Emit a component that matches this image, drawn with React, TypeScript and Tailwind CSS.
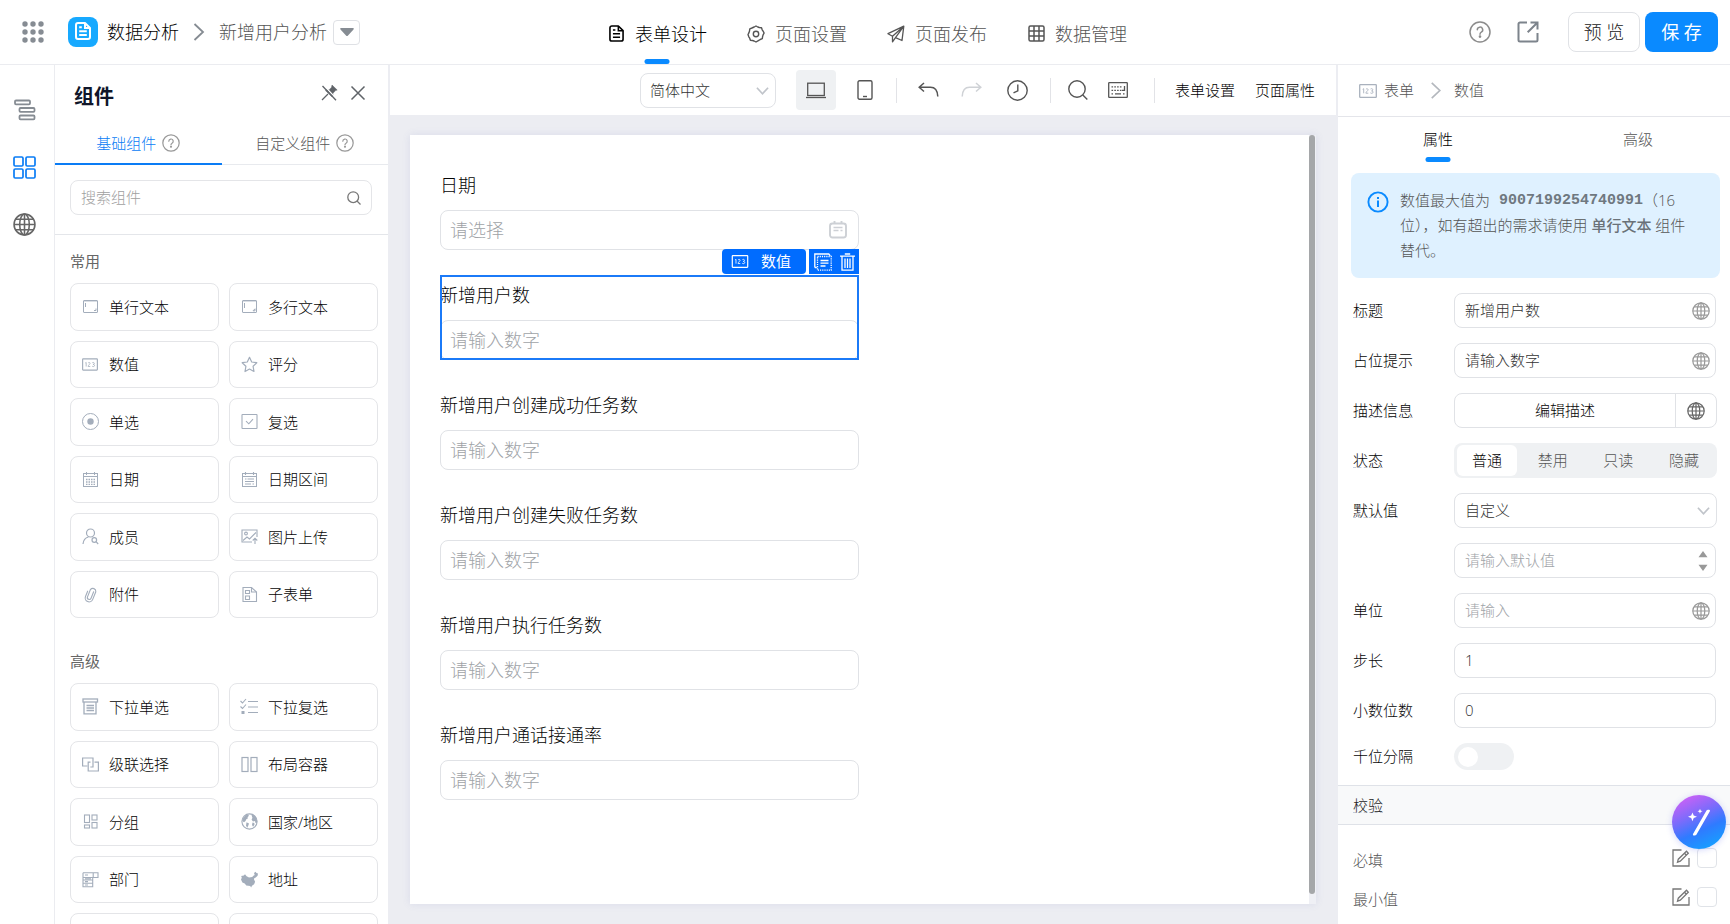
import React, { useState } from "react";
import type { ReactNode } from "react";

/* ---------- shared drawing helpers ---------- */

type SvgProps = { className?: string; box?: string; w?: number; children: ReactNode };

function Svg({ className = "size-[17px]", box = "0 0 17 17", w = 1, children }: SvgProps) {
  return (
    <svg
      className={`block shrink-0 ${className}`}
      viewBox={box}
      fill="none"
      stroke="currentColor"
      strokeWidth={w}
      aria-hidden="true"
    >
      {children}
    </svg>
  );
}

function HelpIcon({ className }: { className: string }) {
  return (
    <Svg className={className} box="0 0 22 22" w={1.5}>
      <circle cx="11" cy="11" r="10" />
      <path d="M8.3 8.8a2.7 2.7 0 1 1 4 2.4c-.9.5-1.3 1-1.3 2" strokeLinecap="round" />
      <circle cx="11" cy="15.6" r="0.6" fill="currentColor" />
    </Svg>
  );
}

function GlobeIcon({ className }: { className: string }) {
  return (
    <Svg className={className} box="0 0 22 22" w={1.5}>
      <circle cx="11" cy="11" r="10" />
      <ellipse cx="11" cy="11" rx="4.6" ry="10" />
      <path d="M11 1v20M1 11h20M2.6 6h16.8M2.6 16h16.8" />
    </Svg>
  );
}

function ChevronDown({ className }: { className: string }) {
  return (
    <Svg className={className} box="0 0 14 14" w={1.8}>
      <path d="M1 4l6 6.5L13 4" />
    </Svg>
  );
}

function ChevronRight({ className }: { className: string }) {
  return (
    <Svg className={className} box="0 0 12 18" w={1.8}>
      <path d="M1.5 1l8.5 8-8.5 8" />
    </Svg>
  );
}

function NumberIcon({ className }: { className: string }) {
  return (
    <Svg className={className} box="0 0 18 14" w={1.3}>
      <rect x="0.7" y="0.7" width="16.6" height="12.6" rx="0.6" />
      <path d="M3.7 5.3l1-.6v4.6M6.9 5.4c.4-.9 2.2-.9 2.2.3 0 1-2.2 2-2.2 3.5h2.4M11.6 5c1-.7 2.4-.2 2.2.9-.1.7-.6 1-1.2 1 .8 0 1.5.4 1.5 1.2 0 1.3-1.7 1.6-2.7.8" strokeWidth="0.9" />
    </Svg>
  );
}

function DocIcon({ className, w = 1.7 }: { className: string; w?: number }) {
  return (
    <Svg className={className} box="0 0 16 18" w={w}>
      <path d="M10 1H3a2 2 0 0 0-2 2v12a2 2 0 0 0 2 2h10a2 2 0 0 0 2-2V6z" strokeLinejoin="round" />
      <path d="M10 1v5h5M4.2 5.2h2.6M4.2 9.3h7.6M4.2 13h7.6" />
    </Svg>
  );
}

/* ---------- component palette ---------- */

type PaletteItem = { name: string; icon: ReactNode };

const basic: PaletteItem[] = [
  {
    name: "单行文本",
    icon: <Svg><rect x="1.5" y="2.5" width="14" height="12" rx=".5" /><path d="M3.500 5v4M12 12.500h2V10.500" /><path d="M2 3.500h13" strokeOpacity=".4" /></Svg>,
  },
  {
    name: "多行文本",
    icon: <Svg><rect x="1.5" y="2.5" width="14" height="12" rx=".5" /><path d="M3.500 5v5M12 12.800l2-2v2z" /><path d="M2 3.500h13" strokeOpacity=".4" /></Svg>,
  },
  { name: "数值", icon: <NumberIcon className="h-[13px] w-[16px]" /> },
  {
    name: "评分",
    icon: <Svg w={1.2}><path d="M8.500 1.300l2.200 4.700 5.100.7-3.700 3.600.9 5.200-4.500-2.500L4 15.500l.9-5.200L1.200 6.700 6.300 6z" strokeLinejoin="round" /></Svg>,
  },
  {
    name: "单选",
    icon: <Svg><circle cx="8.500" cy="8.500" r="8" /><circle cx="8.500" cy="8.500" r="3.200" fill="currentColor" stroke="none" /></Svg>,
  },
  {
    name: "复选",
    icon: <Svg w={1.1}><rect x="1" y="1.500" width="15" height="14" rx=".5" /><path d="M5 8.200l2.800 2.600L12 6.200" /></Svg>,
  },
  {
    name: "日期",
    icon: <Svg><rect x="1.500" y="2.500" width="14" height="13" /><path d="M4.500 1v3M12.500 1v3M1 5.500h15" /><path d="M4 8.500h9M4 11h9M4 13.300h9" strokeDasharray="1.500 1" strokeWidth="1.300" /></Svg>,
  },
  {
    name: "日期区间",
    icon: <Svg><rect x="1.500" y="2.500" width="14" height="13" /><path d="M4.500 1v3M12.500 1v3M1 5.500h15M4 8h1.500M6.500 8H13M4 10.500h9M4 13h6M11.500 13H13" strokeWidth="1.100" /></Svg>,
  },
  {
    name: "成员",
    icon: <Svg w={1.2}><circle cx="8.500" cy="5" r="4" /><path d="M1 16c.4-4 2.500-6.200 5.400-7" /><circle cx="12.300" cy="12" r="2.300" /><path d="M14 13.700l2.200 2.300" /></Svg>,
  },
  {
    name: "图片上传",
    icon: <Svg w={1.1}><path d="M11 14H1V2h15v7" /><circle cx="5" cy="5.500" r="1.400" /><path d="M2 12.500l4-3.500 2.500 2L15 4.500M14 16v-5.500M11.700 12.500L14 10.300l2.300 2.200" /></Svg>,
  },
  {
    name: "附件",
    icon: <Svg w={1.1}><g transform="rotate(22 8.500 8.500)"><path d="M10.400 4.800v7a1.900 1.900 0 0 1-3.800 0V4a3 3 0 0 1 5.800 0v8.200a3.900 3.900 0 0 1-7.800 0V6.500" strokeLinecap="round" /></g></Svg>,
  },
  {
    name: "子表单",
    icon: <Svg w={1.1}><path d="M10.500 1.500H2v14h13.500V6z" /><path d="M10.500 1.500V6h5" /><path d="M4.500 4.500h4v3h-4zM4.500 10h4v3.500h-4z" /></Svg>,
  },
];

const advanced: PaletteItem[] = [
  {
    name: "下拉单选",
    icon: <Svg w={1.3}><rect x="1" y="1" width="14.500" height="3" /><path d="M2 4v11.800h12V4M4.500 7.500h7.500M4.500 10h7.500M4.500 12.500h7.500" /></Svg>,
  },
  {
    name: "下拉复选",
    icon: <Svg className="h-[17px] w-[18px]" box="0 0 18 17" w={1.1}><path d="M.5 3L2.500 5 6 1M.5 8.500l2 2 3.500-4M8 3.500h10M8 9h10M8 14.500h10" /><rect x="1.500" y="13" width="3" height="3" fill="currentColor" stroke="none" /></Svg>,
  },
  {
    name: "级联选择",
    icon: <Svg w={1.2}><path d="M5.500 10H.6V2H11v4" /><path d="M11 9.500V6.200M8.500 6.200H6.200V15h10.200V6.200H12.500M11 6v5H8.300" /></Svg>,
  },
  {
    name: "布局容器",
    icon: <Svg w={1.2}><rect x="1" y="1.500" width="6" height="14" /><rect x="10" y="1.500" width="6" height="14" /></Svg>,
  },
  {
    name: "分组",
    icon: <Svg w={1.1}><rect x="2.500" y="2" width="5" height="7.500" /><rect x="10" y="2" width="5" height="5" /><rect x="2.500" y="12" width="5" height="3" /><rect x="10" y="9.500" width="5" height="5.500" /></Svg>,
  },
  {
    name: "国家/地区",
    icon: <Svg w={1.1}><circle cx="8.500" cy="8.500" r="7.600" /><path d="M1.500 6l3-3.800 2.500-.4 1 1-1.500 1.400.5 1-1.700 1-.8 1.800L3 9.300 1.300 8zM5.500 9.300l2.500 1.200-.7 2-1 2.300-1.300-2zM10.500 2l2.200-.3 2.500 2.800 1 3.500-.6 2.500-1.200-.7-.4-1.800-2 .6-1.400-1.800.8-2zM11.500 9.500l1.800.5.2 1.800-1.400 2-1.100-1.800z" fill="currentColor" stroke="none" /></Svg>,
  },
  {
    name: "部门",
    icon: <Svg w={1.1}><path d="M1 1.800h15v4.700h-4.800V1.800M1 1.800v4.700h10.200M1 6.500v9.300h9.700V6.500M1 9h9.700M1 12.300h9.700M3 4h3M3 7.800h6M3 10.600h3M3 14h3" /></Svg>,
  },
  {
    name: "地址",
    icon: <Svg><path d="M.2 5l2.600-.6L4 3.200l1.600 2 2.400 1.300 3.200-.4 1.200-1.400 1.300-.8-.7-1.900L14.500.8l1 1.200 1.500.6-.4 2.200-1.900 1.600-1.500.9-.2 1.300 1.100 2.100-1 2.500-2.100 1.500-.9 1.700-.9-1.400-1.900-.2-2-.4-1.600-2-2.300-.9L0 8.500l.8-1.700z" fill="currentColor" stroke="none" /></Svg>,
  },
];

function PaletteGroup({ title, items, spare = 0 }: { title: string; items: PaletteItem[]; spare?: number }) {
  return (
    <section className="pt-[14px] pb-[17px]">
      <h3 className="text-[15px] leading-6 font-normal text-[#666]">{title}</h3>
      <div className="mt-[10px] grid h-[335px] grid-cols-2 grid-rows-6 gap-[10px]">
        {items.map((item) => (
          <button
            key={item.name}
            type="button"
            className="flex items-center gap-[10px] rounded-lg border border-[#e4e5e8] bg-white pl-[10px] text-[15px] text-[#050505]"
          >
            <span className="flex w-[18px] justify-center text-[#a3adbb]">{item.icon}</span>
            {item.name}
          </button>
        ))}
        {Array.from({ length: spare }, (_, i) => (
          <div key={i} className="rounded-lg border border-[#e4e5e8]" />
        ))}
      </div>
    </section>
  );
}

function Palette() {
  return (
    <aside className="flex w-[335px] shrink-0 flex-col border-r-2 border-[#ecedf2] bg-white">
      <header className="flex items-center pt-[19px] pr-[22px] pl-[19px]">
        <h2 className="flex-1 text-xl leading-6 font-bold text-[#10162a]">组件</h2>
        <div className="flex gap-[12px] pb-2 text-[#5f6368]">
          <button type="button" aria-label="取消固定">
            <Svg className="size-[17px]" box="0 0 17 17" w={1.3}>
              <path d="M11 1l5.200 5-1.700.6-2.500 2.600v2.800l-1 .7L4.500 6.600l.9-.8 2.700.1 2.500-2.700z" fill="currentColor" strokeWidth=".5" />
              <path d="M1 16l6-6" />
              <path d="M3 1.500l13 14" stroke="white" strokeWidth="1.200" />
              <path d="M1.500 2l13.500 14.300" />
            </Svg>
          </button>
          <button type="button" aria-label="关闭">
            <Svg className="size-[16px]" box="0 0 16 16" w={1.5}>
              <path d="M1.500 1.500l13 13M14.500 1.500l-13 13" />
            </Svg>
          </button>
        </div>
      </header>
      <div className="mt-[14px] grid grid-cols-2 border-b border-[#e8eaee] text-[15px]" role="tablist">
        <button type="button" role="tab" aria-selected="true" className="-mb-px flex h-[42px] items-center justify-center gap-[6px] border-b-2 border-[#0a7cf5] text-[#0a7cf5]">
          基础组件
          <HelpIcon className="size-[18px] text-[#999]" />
        </button>
        <button type="button" role="tab" aria-selected="false" className="flex h-[41px] items-center justify-center gap-[6px] pb-px text-[#555]">
          自定义组件
          <HelpIcon className="size-[18px] text-[#999]" />
        </button>
      </div>
      <div className="border-b border-[#e4e6ea] pr-4 pl-[15px] pt-[15px] pb-[19px]">
        <div className="flex h-[35px] items-center rounded-lg border border-[#e4e5e8] px-[10px]">
          <input aria-label="搜索组件" placeholder="搜索组件" className="min-w-0 flex-1 bg-transparent text-[15px] outline-none placeholder:text-[#a0a0a0]" />
          <Svg className="size-[14px] text-[#777]" box="0 0 14 14" w={1.3}>
            <circle cx="6.200" cy="6.200" r="5.400" />
            <path d="M10 10l3.500 3.500" />
          </Svg>
        </div>
      </div>
      <div className="min-h-0 flex-1 overflow-hidden pr-[10px] pl-[15px]">
        <PaletteGroup title="常用" items={basic} />
        <PaletteGroup title="高级" items={advanced} spare={2} />
      </div>
    </aside>
  );
}

/* ---------- header ---------- */

const navItems = [
  { name: "表单设计", icon: <DocIcon className="h-[17px] w-[15px]" /> },
  {
    name: "页面设置",
    icon: (
      <Svg className="size-[18px]" box="0 0 18 18" w={1.4}>
        <path d="M7.200 2L9 1l1.800 1 1.500.5 2.200.2.700 2.100.9 1.400 1 1.800-1 1.900-.5 1.600-.3 2.200-2.100.800-1.400.800L9 17l-1.900-1-1.500-.5-2.200-.2-.700-2.100-.9-1.400L1 9.500l1-1.900.5-1.600.3-2.200 2.100-.800z" strokeLinejoin="round" />
        <circle cx="9" cy="9" r="2.700" />
      </Svg>
    ),
  },
  {
    name: "页面发布",
    icon: (
      <Svg className="size-[18px]" box="0 0 18 18" w={1.3}>
        <path d="M16.800 1.200L1 8.700l4.500 2.500L16.800 1.200 15 15.500l-6.500-2.800M5.500 11.200v5.600l3-4.100L16.800 1.200" strokeLinejoin="round" />
      </Svg>
    ),
  },
  {
    name: "数据管理",
    icon: (
      <Svg className="size-[17px]" box="0 0 17 17" w={1.5}>
        <rect x="1" y="1" width="15" height="15" rx="1.500" />
        <path d="M6 1v15M11 1v15M1 6h15M1 11h15" />
      </Svg>
    ),
  },
];

function TopBar() {
  return (
    <header className="grid h-[65px] shrink-0 grid-cols-[1fr_auto_1fr] border-b border-[#ebecf0] bg-white text-lg">
      <div className="flex items-center pl-[22px]">
        <button type="button" aria-label="应用列表" className="text-[#868c93]">
          <Svg className="size-[22px]" box="0 0 22 22">
            <g fill="currentColor" stroke="none">
              {[3, 11, 19].map((y) => [3, 11, 19].map((x) => <circle key={`${x}-${y}`} cx={x} cy={y} r="2.700" />))}
            </g>
          </Svg>
        </button>
        <span className="ml-6 flex size-[30px] items-center justify-center rounded-lg bg-[#17a9ff] pb-0.5 text-white">
          <DocIcon className="h-[18px] w-[16px]" w={2} />
        </span>
        <a href="#app" className="ml-[9px] text-black">数据分析</a>
        <ChevronRight className="ml-[14px] h-[18px] w-[12px] text-[#858b92]" />
        <span className="ml-[14px] text-[#555]">新增用户分析</span>
        <button type="button" aria-label="切换页面" className="ml-[6px] flex h-[25px] w-[27px] items-center justify-center rounded border border-[#dfe1e5]">
          <svg className="block h-[8px] w-[14px] fill-[#868c93]" viewBox="0 0 14 8" aria-hidden="true">
            <path d="M1.200 0h11.600c.9 0 1.400.8.7 1.500L8 7.400c-.6.700-1.400.7-2 0L.5 1.500C-.2.800.300 0 1.200 0z" />
          </svg>
        </button>
      </div>
      <nav className="flex gap-[40px] pl-1">
        {navItems.map((item, i) => (
          <a key={item.name} href="#nav" className={`relative flex items-center gap-[10px] pt-[3px] ${i === 0 ? "text-black" : "text-[#555]"}`}>
            <span className="flex w-[18px] justify-center">{item.icon}</span>
            {item.name}
            {i === 0 && <span className="absolute bottom-0 left-1/2 h-[5px] w-[25px] -translate-x-1/2 rounded-sm bg-[#0a8aff]" />}
          </a>
        ))}
      </nav>
      <div className="flex items-center justify-end pr-3">
        <button type="button" aria-label="帮助" className="text-[#8c8c8c]">
          <HelpIcon className="size-[22px]" />
        </button>
        <button type="button" aria-label="在新窗口打开" className="ml-[26px] text-[#7d848c]">
          <Svg className="size-[22px]" box="0 0 22 22" w={2}>
            <path d="M10 1.500H3A1.500 1.500 0 0 0 1.500 3v16A1.500 1.500 0 0 0 3 20.500h16a1.500 1.500 0 0 0 1.500-1.500v-7M13.500 1.500h7v7M20.500 1.500l-9.800 9.800" />
          </Svg>
        </button>
        <button type="button" className="ml-[29px] h-10 w-[72px] rounded-lg border border-[#e0e2e6] text-[#222]">预 览</button>
        <button type="button" className="ml-[5px] h-10 w-[73px] rounded-lg bg-[#0a8aff] font-normal text-white">保 存</button>
      </div>
    </header>
  );
}

function Rail() {
  return (
    <nav className="flex w-[55px] shrink-0 flex-col items-center gap-[34px] border-r border-[#ebecf0] bg-white pt-[34px] pr-[5px] text-[#666]">
      <button type="button" aria-label="大纲" className="text-[#868c93]">
        <Svg className="size-[23px]" box="0 0 23 23" w={1.8}>
          <rect x="2" y="1.500" width="15" height="3.800" rx="1" />
          <rect x="6.500" y="9" width="15" height="3.800" rx="1" />
          <rect x="6.500" y="16.500" width="15" height="3.800" rx="1" />
        </Svg>
      </button>
      <button type="button" aria-label="组件" className="text-[#0a7cf5]">
        <Svg className="size-[23px]" box="0 0 23 23" w={1.7}>
          <rect x="1" y="1" width="9" height="9" rx="1.200" />
          <rect x="13" y="1" width="9" height="9" rx="1.200" />
          <rect x="1" y="13" width="9" height="9" rx="1.200" />
          <rect x="13" y="13" width="9" height="9" rx="1.200" />
        </Svg>
      </button>
      <button type="button" aria-label="多语言">
        <GlobeIcon className="size-[23px]" />
      </button>
    </nav>
  );
}

/* ---------- canvas ---------- */

function Divider({ className }: { className: string }) {
  return <span className={`block h-[25px] w-px shrink-0 bg-[#e2e3e7] ${className}`} />;
}

function Toolbar() {
  return (
    <div className="flex h-[50px] shrink-0 items-center justify-end bg-white pr-[21px] text-[#555]">
      <div className="relative h-[35px] w-[136px]">
        <select aria-label="语言" className="size-full appearance-none rounded-lg border border-[#e0e2e6] bg-white pl-[9px] text-[15px] text-[#333]">
          <option>简体中文</option>
        </select>
        <ChevronDown className="pointer-events-none absolute top-[11px] right-[7px] size-[13px] text-[#c0c4ca]" />
      </div>
      <button type="button" aria-label="电脑端" className="ml-5 flex size-10 items-center justify-center rounded bg-[#eff1f3]">
        <Svg className="h-[17px] w-[20px]" box="0 0 20 17" w={1.3}>
          <rect x="1.700" y="1.200" width="16.600" height="12.300" />
          <path d="M0 15.500h20" />
        </Svg>
      </button>
      <button type="button" aria-label="移动端" className="ml-[21px]">
        <Svg className="h-[20px] w-[16px]" box="0 0 16 20" w={1.4}>
          <rect x="1" y="0.700" width="14" height="18.600" rx="1.500" />
          <path d="M6 16.500h4" />
        </Svg>
      </button>
      <Divider className="mr-[21px] ml-[23px]" />
      <button type="button" aria-label="撤销">
        <Svg className="h-[16px] w-[21px]" box="0 0 21 16" w={1.5}>
          <path d="M6 1L1.200 5.300 6 9.500M1.500 5.300h11c4 0 7 3 7.300 9.200" />
        </Svg>
      </button>
      <button type="button" aria-label="重做" className="ml-[22px] text-[#cfd2d6]">
        <Svg className="h-[16px] w-[21px]" box="0 0 21 16" w={1.5}>
          <path d="M15 1l4.800 4.300L15 9.500M19.500 5.300h-11c-4 0-7 3-7.300 9.200" />
        </Svg>
      </button>
      <button type="button" aria-label="历史" className="ml-[25px]">
        <Svg className="size-[21px]" box="0 0 21 21" w={1.4}>
          <circle cx="10.500" cy="10.500" r="9.700" />
          <path d="M10.800 4.500v6.300l-4.300 2" />
        </Svg>
      </button>
      <Divider className="mr-[17px] ml-[22px]" />
      <button type="button" aria-label="搜索">
        <Svg className="size-[20px]" box="0 0 20 20" w={1.4}>
          <circle cx="9" cy="9" r="8.200" />
          <path d="M14.800 15l4.500 4.500" />
        </Svg>
      </button>
      <button type="button" aria-label="快捷键" className="ml-5">
        <Svg className="h-[16px] w-[20px]" box="0 0 20 16" w={1.3}>
          <rect x="0.700" y="0.700" width="18.600" height="14.600" rx=".6" />
          <path d="M3.500 4.800h10M3.500 8.300h10M3.500 11.800H5M15 11.800h1.500" strokeDasharray="1.600 1.200" />
          <path d="M7 11.800h6M16.500 4v4.300H14" />
        </Svg>
      </button>
      <Divider className="mr-5 ml-[26px]" />
      <button type="button" className="text-[15px] text-black">表单设置</button>
      <button type="button" className="ml-5 text-[15px] text-black">页面属性</button>
    </div>
  );
}

const formFields = [
  { label: "日期", placeholder: "请选择", date: true },
  { label: "新增用户数", placeholder: "请输入数字", selected: true },
  { label: "新增用户创建成功任务数", placeholder: "请输入数字" },
  { label: "新增用户创建失败任务数", placeholder: "请输入数字" },
  { label: "新增用户执行任务数", placeholder: "请输入数字" },
  { label: "新增用户通话接通率", placeholder: "请输入数字" },
];

function SelectionFrame() {
  return (
    <>
      <div className="pointer-events-none absolute inset-0 border-2 border-[#1b7af8]" />
      <div className="absolute right-0 bottom-full mb-px flex gap-[3px] text-[15px] text-white">
        <span className="flex h-[25px] w-[84px] items-center gap-3 rounded bg-[#006cff] pl-[9px] font-normal">
          <NumberIcon className="h-[13px] w-[18px]" />
          数值
        </span>
        <span className="flex h-[25px] w-[50px] items-center justify-center gap-2 bg-[#006cff]">
          <button type="button" aria-label="复制">
            <Svg className="size-[18px]" box="0 0 18 18" w={1.3}>
              <path d="M.8 14.500V1h14l1.500 1.800M.8 14.500h2" />
              <path d="M3.500 3.500h13.700v13.700H3.500z" strokeDasharray="1.200 1" />
              <path d="M6.500 7.500h8M6.500 10.200h8M6.500 13h5" />
            </Svg>
          </button>
          <button type="button" aria-label="删除">
            <Svg className="h-[18px] w-[15px]" box="0 0 15 18" w={1.3}>
              <path d="M0 3.200h15M4.800 1h5.400M2 3.200v14h11v-14M5 5.500v9.500M7.500 5.500v9.500M10 5.500v9.500" />
            </Svg>
          </button>
        </span>
      </div>
    </>
  );
}

function Canvas() {
  return (
    <main className="flex min-w-0 flex-1 flex-col bg-[#ecedf2]">
      <Toolbar />
      <div className="min-h-0 flex-1 p-5">
        <div className="flex h-full bg-white shadow-[0_0_8px_rgba(90,100,180,0.12)]">
          <form className="flex min-w-0 flex-1 flex-col gap-[25px] overflow-hidden p-[30px] pr-[31px]">
            {formFields.map((f, i) => (
              <div key={f.label} className="relative w-1/2 pt-2">
                <label htmlFor={`field-${i}`} className="block text-lg leading-6 text-[#050505]">{f.label}</label>
                <div className="relative mt-[13px] flex h-10 items-center rounded-lg border border-[#e0e2e6] pr-[11px] pl-[9px]">
                  <input id={`field-${i}`} placeholder={f.placeholder} className="min-w-0 flex-1 bg-transparent text-lg outline-none placeholder:text-[#a0a3a7]" />
                  {f.date && (
                    <Svg className="size-[18px] text-[#cdd0d5]" box="0 0 18 18" w={1.9}>
                      <rect x="1" y="2.500" width="16" height="14" rx="2.500" />
                      <path d="M5.500 0v3M12.500 0v3" />
                      <path d="M4.500 6.500h9M4.500 9.500h5M11.500 9.500h2" strokeWidth="1.400" />
                    </Svg>
                  )}
                </div>
                {f.selected && <SelectionFrame />}
              </div>
            ))}
          </form>
          <div className="w-[7px] bg-[#eff0f5] pr-px pb-[10px]">
            <div className="h-full rounded-full bg-[#a5a7a9]" />
          </div>
        </div>
      </div>
    </main>
  );
}

/* ---------- property panel ---------- */

function Row({ id, label, hint, children }: { id?: string; label: string; hint?: boolean; children: ReactNode }) {
  return (
    <div className="flex h-[35px] items-center">
      <label
        htmlFor={id}
        className={
          hint
            ? "w-[101px] shrink-0 text-[15px] text-[#050505] underline decoration-[#c3cbd9] decoration-dashed decoration-1 underline-offset-1"
            : "w-[101px] shrink-0 text-[15px] text-[#050505]"
        }
      >
        {label}
      </label>
      <div className="min-w-0 flex-1">{children}</div>
    </div>
  );
}

function TextField({ id, value, placeholder, end }: { id: string; value?: string; placeholder?: string; end?: ReactNode }) {
  return (
    <div className="mr-px flex h-[35px] items-center rounded-lg border border-[#e0e2e6] pr-[5px] pl-[10px]">
      <input id={id} defaultValue={value} placeholder={placeholder} className="min-w-0 flex-1 bg-transparent text-[15px] text-[#333] outline-none placeholder:text-[#a0a3a7]" />
      {end}
    </div>
  );
}

const states = ["普通", "禁用", "只读", "隐藏"];

function PropertyPanel() {
  const [state, setState] = useState("普通");
  const globe = <GlobeIcon className="size-[18px] text-[#999]" />;
  return (
    <aside className="w-[394px] shrink-0 overflow-hidden border-l-2 border-[#ecedf2] bg-white">
      <div className="flex h-[52px] items-center border-b border-[#e4e5ea] pl-[21px] text-[15px] text-[#555]">
        <NumberIcon className="h-[14px] w-[18px] text-[#a9b1bd]" />
        <a href="#form" className="ml-[7px]">表单</a>
        <ChevronRight className="mr-3 ml-4 h-[17px] w-[12px] text-[#b4b8be]" />
        <span>数值</span>
      </div>
      <div className="flex text-[15px]" role="tablist">
        <button type="button" role="tab" aria-selected="true" className="relative h-[45px] w-[200px] shrink-0 text-black">
          属性
          <span className="absolute bottom-0 left-1/2 h-[5px] w-[25px] -translate-x-1/2 rounded-sm bg-[#0a8aff]" />
        </button>
        <button type="button" role="tab" aria-selected="false" className="h-[45px] w-[200px] shrink-0 text-[#555]">高级</button>
      </div>
      <div className="mt-[11px] mr-[10px] ml-[13px] flex rounded-lg bg-[#dff1ff] pt-[15px] pr-5 pb-[15px] pl-4">
        <Svg className="mt-[3px] size-[22px] text-[#0a8aff]" box="0 0 22 22" w={1.9}>
          <circle cx="11" cy="11" r="9.600" />
          <path d="M11 9.500v6.500M11 6v2" strokeWidth="2" />
        </Svg>
        <p className="ml-[11px] h-[75px] text-[15px] leading-[25px] text-[#555]">
          数值最大值为{" "}
          <code className="ml-[5px] align-top font-['Liberation_Mono',monospace] text-[15px] leading-[25px] font-bold text-[#6f7880]">9007199254740991</code>（16位），如有超出的需求请使用{" "}
          <b className="font-medium text-[#6a7178]">单行文本</b> 组件替代。
        </p>
      </div>
      <div className="flex flex-col gap-[15px] py-[15px] pr-[13px] pl-[15px]">
        <Row id="p-title" label="标题" hint>
          <TextField id="p-title" value="新增用户数" end={globe} />
        </Row>
        <Row id="p-ph" label="占位提示">
          <TextField id="p-ph" value="请输入数字" end={globe} />
        </Row>
        <Row id="p-desc" label="描述信息" hint>
          <div className="flex h-[35px] divide-x divide-[#e0e2e6] rounded-lg border border-[#e0e2e6]">
            <button id="p-desc" type="button" className="flex-1 text-[15px] text-[#050505]">编辑描述</button>
            <button type="button" aria-label="多语言" className="flex w-[40px] items-center justify-center">
              <GlobeIcon className="size-[18px] text-[#666]" />
            </button>
          </div>
        </Row>
        <Row label="状态" hint>
          <div className="flex h-[35px] justify-between rounded-lg bg-[#eff1f3] px-[3px] py-[2px] text-[15px]">
            {states.map((s) => (
              <button
                key={s}
                type="button"
                aria-pressed={state === s}
                onClick={() => setState(s)}
                className={`w-[60px] rounded-md ${state === s ? "bg-white text-black" : "text-[#555]"}`}
              >
                {s}
              </button>
            ))}
          </div>
        </Row>
        <Row id="p-default" label="默认值" hint>
          <div className="relative h-[35px]">
            <select id="p-default" className="size-full appearance-none rounded-lg border border-[#e0e2e6] bg-white pl-[10px] text-[15px] text-[#333]">
              <option>自定义</option>
            </select>
            <ChevronDown className="pointer-events-none absolute top-[11px] right-[7px] size-[13px] text-[#c0c4ca]" />
          </div>
        </Row>
        <div className="pl-[101px]">
          <div className="mr-px flex h-[35px] items-center rounded-lg border border-[#e0e2e6] pr-[7px] pl-[10px]">
            <input aria-label="默认值" placeholder="请输入默认值" className="min-w-0 flex-1 bg-transparent text-[15px] outline-none placeholder:text-[#a0a3a7]" />
            <svg className="block h-[20px] w-[10px] fill-[#999]" viewBox="0 0 10 20" aria-hidden="true">
              <path d="M5 0l4.500 6.200h-9zM5 20l4.500-6.200h-9z" />
            </svg>
          </div>
        </div>
        <Row id="p-unit" label="单位">
          <TextField id="p-unit" placeholder="请输入" end={globe} />
        </Row>
        <Row id="p-step" label="步长">
          <TextField id="p-step" value="1" />
        </Row>
        <Row id="p-digits" label="小数位数">
          <TextField id="p-digits" value="0" />
        </Row>
        <div className="flex h-[27px] items-center">
          <label htmlFor="p-thousand" className="w-[101px] text-[15px] text-[#050505]">千位分隔</label>
          <input
            id="p-thousand"
            type="checkbox"
            role="switch"
            className="h-[27px] w-[60px] appearance-none rounded-full bg-[#eff1f3] p-1 before:block before:size-[20px] before:rounded-full before:bg-white checked:bg-[#0a8aff]"
          />
        </div>
      </div>
      <h3 className="h-[40px] border-y border-[#dfe2e8] bg-[#f8f9fa] pl-[15px] text-[15px] leading-[38px] font-light text-[#222]">
        <span className="underline decoration-[#c3cbd9] decoration-dashed decoration-1 underline-offset-1">校验</span>
      </h3>
      <div className="flex flex-col gap-[19px] pt-[23px] pr-[13px] pl-[15px] text-[15px] text-[#555]">
        {["必填", "最小值"].map((name) => (
          <div key={name} className="flex h-5 items-center">
            <label htmlFor={`rule-${name}`} className="flex-1 pt-1">{name}</label>
            <button type="button" aria-label={`编辑${name}`} className="mr-[7px] text-[#777]">
              <Svg className="size-[18px]" box="0 0 18 18" w={1.3}>
                <path d="M9.500 1H1v16h16V9" />
                <path d="M14.500 2.200l1.800 2-8 8-2.800 1 .8-3 8.200-8zM12.500 4.200l1.900 2" />
              </Svg>
            </button>
            <input id={`rule-${name}`} type="checkbox" className="size-5 appearance-none rounded border border-[#e0e3e8] bg-white checked:bg-[#0a8aff]" />
          </div>
        ))}
      </div>
    </aside>
  );
}

function AssistantButton() {
  return (
    <button
      type="button"
      aria-label="智能助手"
      className="fixed right-1 bottom-[75px] flex size-[54px] items-center justify-center rounded-full bg-[linear-gradient(155deg,#d760f5_5%,#7d6bfb_38%,#2f7bff_62%,#12a6ff_95%)] text-white shadow-[0_1px_6px_rgba(80,90,240,0.25)]"
    >
      <Svg className="size-[54px]" box="0 0 54 54">
        <path d="M34.500 15.500c.6-1 3.900-1 3.500.5L24.500 39.500c-.6 1.200-4.300 1.800-3.500-.4z" fill="currentColor" stroke="none" />
        <path d="M20.500 17.500l1.200 3 3.300 1.300-3.300 1.300-1.200 3.200-1.300-3.200-3.200-1.300 3.200-1.300zM28 13.800l.7 1.700 1.800.7-1.800.7-.7 1.800-.7-1.800-1.800-.7 1.800-.7z" fill="currentColor" stroke="none" />
      </Svg>
    </button>
  );
}

export default function App() {
  return (
    <div className="flex h-screen flex-col overflow-hidden bg-white font-['Open_Sans','Noto_Sans_CJK_SC',sans-serif] font-light">
      <TopBar />
      <div className="flex min-h-0 flex-1">
        <Rail />
        <Palette />
        <Canvas />
        <PropertyPanel />
      </div>
      <AssistantButton />
    </div>
  );
}
